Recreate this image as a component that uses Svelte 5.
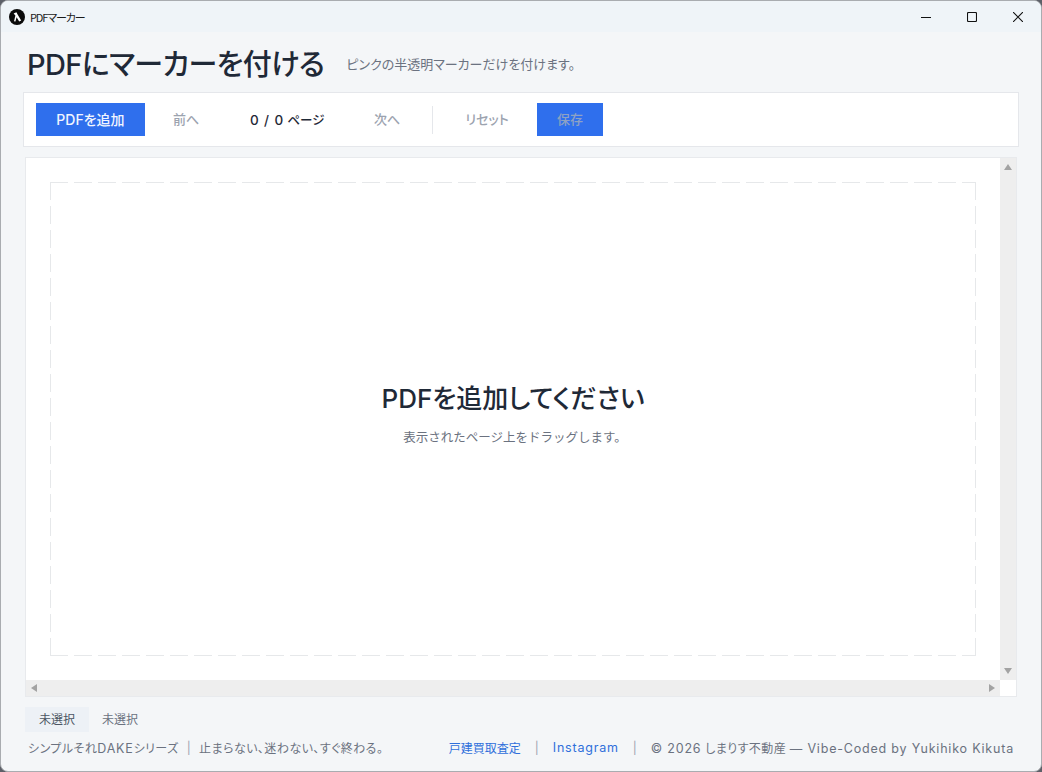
<script>
  const pageLabel = 'ページ';
</script>

<div class="desktop">
  <div class="window">
    <header class="titlebar">
      <svg class="app-icon" viewBox="0 0 16 16" width="16" height="16">
        <circle cx="8" cy="8" r="8" fill="#0b0b0b" />
        <path d="M4.6 4.6 L7.4 3.2 L8.6 5.6 L12.2 11.4 L10.2 12.6 L7.6 8.2 L6.4 12.6 L5 12.2 L6.4 6.4 Z" fill="#fff" />
      </svg>
      <span class="window-title">PDFマーカー</span>
      <div class="window-controls">
        <svg viewBox="0 0 10 10" width="10" height="10"><path d="M0 5.5h10" stroke="#111" stroke-width="1.1" fill="none" /></svg>
        <svg viewBox="0 0 10 10" width="10" height="10"><rect x=".5" y=".5" width="9" height="9" rx="1" stroke="#111" stroke-width="1.1" fill="none" /></svg>
        <svg viewBox="0 0 10 10" width="10" height="10"><path d="M0 0l10 10M10 0L0 10" stroke="#111" stroke-width="1.1" fill="none" /></svg>
      </div>
    </header>

    <main class="content">
      <div class="heading">
        <h1>PDFにマーカーを付ける</h1>
        <p>ピンクの半透明マーカーだけを付けます。</p>
      </div>

      <div class="toolbar">
        <button class="primary add">PDFを追加</button>
        <button class="ghost prev">前へ</button>
        <span class="page"><span class="num">0 / 0</span> {pageLabel}</span>
        <button class="ghost next">次へ</button>
        <span class="divider"></span>
        <button class="ghost reset">リセット</button>
        <button class="primary save">保存</button>
      </div>

      <section class="viewer">
        <div class="canvas">
          <div class="drop">
            <h2>PDFを追加してください</h2>
            <p>表示されたページ上をドラッグします。</p>
          </div>
        </div>
        <div class="vbar">
          <span class="arrow up"></span>
          <span class="arrow down"></span>
        </div>
        <div class="hbar">
          <span class="arrow left"></span>
          <span class="arrow right"></span>
        </div>
        <div class="corner"></div>
      </section>

      <div class="tabs">
        <span class="tab active">未選択</span>
        <span class="tab">未選択</span>
      </div>

      <footer class="footer">
        <div class="tagline">
          <span>シンプルそれ<span class="latin">DAKE</span>シリーズ</span>
          <span class="sep">|</span>
          <span>止まらない、迷わない、すぐ終わる。</span>
        </div>
        <div class="credits">
          <span class="link">戸建買取査定</span>
          <span class="sep">|</span>
          <span class="link latin">Instagram</span>
          <span class="sep">|</span>
          <span class="copy"><span class="latin">© 2026</span> しまりす不動産 <span class="latin">— Vibe-Coded by Yukihiko Kikuta</span></span>
        </div>
      </footer>
    </main>
  </div>
</div>

<style>
  :global(body) {
    margin: 0;
    background: #5d6068;
  }

  .desktop {
    width: 1042px;
    height: 772px;
    overflow: hidden;
    font-family: Inter, "Noto Sans CJK JP", sans-serif;
    font-feature-settings: "palt";
  }

  .window {
    width: 1042px;
    height: 772px;
    box-sizing: border-box;
    border: 1px solid #a9acb0;
    border-radius: 8px;
    overflow: hidden;
    background: #f4f6f8;
    display: flex;
    flex-direction: column;
  }

  .titlebar {
    height: 31px;
    flex: none;
    background: #eff4f8;
    display: flex;
    align-items: center;
    padding-left: 8px;
  }

  .app-icon {
    flex: none;
  }

  .window-title {
    margin-left: 5px;
    font-size: 11px;
    color: #1a1a1a;
    font-family: "Noto Sans CJK JP", sans-serif;
    letter-spacing: -1.1px;
  }

  .window-controls {
    margin-left: auto;
    display: flex;
    align-items: center;
    gap: 36px;
    padding-right: 18px;
  }

  .content {
    flex: 1;
    min-height: 0;
    display: flex;
    flex-direction: column;
    padding: 0 22px;
  }

  .heading {
    height: 60px;
    flex: none;
    display: flex;
    align-items: center;
    padding-left: 4px;
  }

  h1 {
    margin: 0;
    font-size: 29px;
    font-weight: 500;
    letter-spacing: -0.6px;
    color: #1f2937;
    white-space: nowrap;
  }

  .heading p {
    margin: 2px 0 0 22px;
    font-size: 13px;
    color: #6b7280;
    white-space: nowrap;
  }

  .toolbar {
    height: 55px;
    flex: none;
    box-sizing: border-box;
    background: #fff;
    border: 1px solid #e5e7eb;
    display: flex;
    align-items: center;
    padding-left: 12px;
  }

  button {
    height: 33px;
    border: none;
    padding: 0 0 2px;
    font: inherit;
    font-size: 13px;
    font-weight: 500;
    white-space: nowrap;
  }

  .primary {
    background: #2f6fed;
  }

  .add {
    width: 109px;
    color: #f1f5ff;
    font-size: 14px;
  }

  .ghost {
    background: none;
    color: #9ca3af;
  }

  .prev {
    width: 28px;
    margin-left: 27px;
  }

  .page {
    width: 75px;
    margin-left: 50px;
    margin-top: -1px;
    font-size: 12.5px;
    font-weight: 500;
    color: #1f2937;
    white-space: nowrap;
  }

  .num {
    font-size: 13.5px;
    letter-spacing: 0.9px;
  }

  .next {
    width: 28px;
    margin-left: 48px;
  }

  .divider {
    width: 1px;
    height: 28px;
    background: #e5e7eb;
    margin-left: 31px;
  }

  .reset {
    width: 46px;
    margin-left: 31px;
  }

  .save {
    width: 66px;
    margin-left: 27px;
    color: #8ea2c4;
  }

  .viewer {
    height: 540px;
    width: 992px;
    flex: none;
    margin: 10px 0 0 2px;
    box-sizing: border-box;
    background: #fff;
    border: 1px solid #e8eaed;
    display: grid;
    grid-template-columns: 1fr 16px;
    grid-template-rows: 1fr 16px;
  }

  .canvas {
    padding: 24px;
    min-width: 0;
    min-height: 0;
  }

  /* long dashes, a plain dashed border draws them too short */
  .drop {
    height: 100%;
    box-sizing: border-box;
    padding-bottom: 14px;
    background:
      repeating-linear-gradient(90deg, #e6e8ea 0 18px, transparent 18px 24px) top / 100% 1px no-repeat,
      repeating-linear-gradient(90deg, #e6e8ea 0 18px, transparent 18px 24px) bottom / 100% 1px no-repeat,
      repeating-linear-gradient(0deg, #e6e8ea 0 18px, transparent 18px 24px) left / 1px 100% no-repeat,
      repeating-linear-gradient(0deg, #e6e8ea 0 18px, transparent 18px 24px) right / 1px 100% no-repeat;
    display: flex;
    flex-direction: column;
    align-items: center;
    justify-content: center;
  }

  .drop h2 {
    margin: 0;
    font-size: 26px;
    font-weight: 500;
    color: #1f2937;
    white-space: nowrap;
  }

  .drop p {
    margin: 12px 0 0;
    padding-left: 4px;
    font-size: 12.5px;
    font-feature-settings: normal;
    color: #6b7280;
    white-space: nowrap;
  }

  .vbar {
    background: #eeeeee;
    display: flex;
    flex-direction: column;
    justify-content: space-between;
    align-items: center;
    padding: 6px 0;
  }

  .hbar {
    background: #eeeeee;
    display: flex;
    justify-content: space-between;
    align-items: center;
    padding: 0 5px;
  }

  .corner {
    background: #fff;
  }

  .arrow {
    width: 0;
    height: 0;
    border-style: solid;
    border-color: transparent;
  }

  .up {
    border-width: 0 4px 6px;
    border-bottom-color: #a3a3a3;
  }

  .down {
    border-width: 6px 4px 0;
    border-top-color: #a3a3a3;
  }

  .left {
    border-width: 4px 6px 4px 0;
    border-right-color: #a3a3a3;
  }

  .right {
    border-width: 4px 0 4px 6px;
    border-left-color: #a3a3a3;
  }

  .tabs {
    display: flex;
    margin: 10px 0 0 2px;
    flex: none;
  }

  .tab {
    height: 25px;
    line-height: 25px;
    padding: 0 14px;
    font-size: 12px;
    color: #6b7280;
  }

  .tab + .tab {
    padding-left: 13px;
  }

  .tab.active {
    background: #edf1f6;
    color: #4b5563;
  }

  .footer {
    flex: none;
    margin: 5px 5px 0 5px;
    height: 20px;
    display: flex;
    justify-content: space-between;
    align-items: center;
    font-size: 12px;
    color: #6b7280;
    white-space: nowrap;
  }

  .tagline, .credits {
    display: flex;
    align-items: center;
  }

  .tagline {
    letter-spacing: 0.45px;
  }

  .tagline .sep {
    margin: 0 8px;
  }

  .latin {
    letter-spacing: 0.8px;
    font-size: 12.5px;
  }

  .copy {
    letter-spacing: 0.4px;
  }

  .sep {
    color: #9ca3af;
  }

  .credits .sep {
    margin: 0 14px;
  }

  .link {
    color: #2f6fdb;
  }
</style>
